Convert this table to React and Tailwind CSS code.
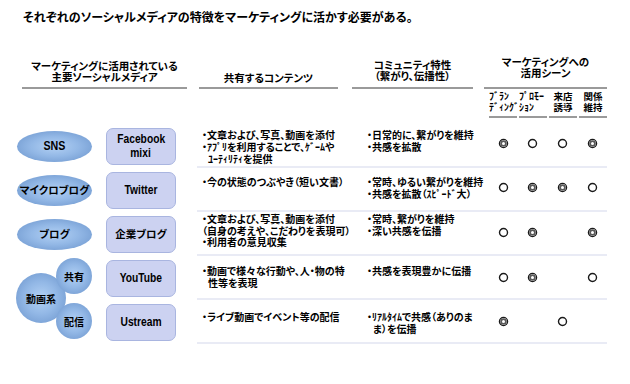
import React from "react";

const jp = "font-['Noto_Sans_CJK_JP',sans-serif] [font-feature-settings:'palt']";
const latin = "font-['Liberation_Sans',Arial,sans-serif]";

function Mark({ type }) {
  if (!type) return <span className="w-[11px] h-[11px]" />;
  if (type === "o")
    return (
      <svg width="11" height="11" viewBox="0 0 11 11">
        <circle cx="5.5" cy="5.5" r="4" fill="white" stroke="#1a1a1a" strokeWidth="1.4" />
      </svg>
    );
  return (
    <svg width="11" height="11" viewBox="0 0 11 11">
      <circle cx="5.5" cy="5.5" r="4.1" fill="white" stroke="#1a1a1a" strokeWidth="1.3" />
      <circle cx="5.5" cy="5.5" r="2.4" fill="white" stroke="#5a5a5a" strokeWidth="1.8" />
    </svg>
  );
}

const rows = [
  {
    c2: [
      { t: "・文章および、写真、動画を添付" },
      { t: "・ｱﾌﾟﾘを利用することで、ｹﾞｰﾑや" },
      { t: "ﾕｰﾃｨﾘﾃｨを提供", indent: true },
    ],
    c3: [{ t: "・日常的に、繋がりを維持" }, { t: "・共感を拡散" }],
    pt: "pt-[5px] leading-[12px]",
    marks: ["d", "o", "o", "d"],
    mp: "pb-[3px]",
  },
  {
    c2: [{ t: "・今の状態のつぶやき（短い文書）" }],
    c3: [{ t: "・常時、ゆるい繋がりを維持" }, { t: "・共感を拡散（ｽﾋﾟｰﾄﾞ大）" }],
    pt: "pt-[8px] leading-[12px]",
    marks: ["o", "d", "d", "o"],
    mp: "pb-[3px]",
  },
  {
    c2: [
      { t: "・文章および、写真、動画を添付" },
      { t: "（自身の考えや、こだわりを表現可）" },
      { t: "・利用者の意見収集" },
    ],
    c3: [{ t: "・常時、繋がりを維持" }, { t: "・深い共感を伝播" }],
    pt: "pt-[1px] leading-[11.5px]",
    marks: ["o", "d", "", "d"],
    mp: "pb-[1px]",
  },
  {
    c2: [{ t: "・動画で様々な行動や、人・物の特" }, { t: "性等を表現", indent: true }],
    c3: [{ t: "・共感を表現豊かに伝播" }],
    pt: "pt-[9px] leading-[11.5px]",
    marks: ["o", "d", "", "o"],
    mp: "",
  },
  {
    c2: [{ t: "・ライブ動画でイベント等の配信" }],
    c3: [{ t: "・ﾘｱﾙﾀｲﾑで共感（ありのま" }, { t: "ま）を伝播", indent: true }],
    pt: "pt-[11px] leading-[11.5px]",
    marks: ["d", "", "o", ""],
    mp: "",
  },
];

const ovalBg =
  "bg-[radial-gradient(ellipse_at_center,#b3d1f4_0%,#93b8e6_45%,#769ed3_82%,#6089c0_100%)]";

function Lines({ lines }) {
  return lines.map((l, i) => (
    <div key={i} className={`whitespace-nowrap ${l.indent ? "pl-[6px]" : ""}`}>
      {l.t}
    </div>
  ));
}

export default function App() {
  return (
    <div className={`w-[630px] h-[384px] bg-white overflow-hidden text-black ${jp}`}>
      <div className="pt-[11px] pl-[23px] text-[12px] leading-[12px] font-bold">
        それぞれのソーシャルメディアの特徴をマーケティングに活かす必要がある。
      </div>

      {/* header */}
      <div className="flex items-start mt-[32px] pl-[22px] font-bold">
        <div className="w-[165px] h-[34px] flex flex-col justify-end items-center border-b-2 border-[#9a9a9a] pb-[5px] text-[10.5px] leading-[11px]">
          <div>マーケティングに活用されている</div>
          <div>主要ソーシャルメディア</div>
        </div>
        <div className="ml-[12px] w-[139px] h-[34px] flex flex-col justify-end items-center border-b-2 border-[#9a9a9a] pb-[4px] text-[10.5px] leading-[11px]">
          <div>共有するコンテンツ</div>
        </div>
        <div className="ml-[14px] w-[121px] h-[34px] flex flex-col justify-end items-center border-b-2 border-[#9a9a9a] pb-[6px] text-[10.5px] leading-[11px]">
          <div>コミュニティ特性</div>
          <div>（繋がり、伝播性）</div>
        </div>
        <div className="ml-[11px] w-[123px] flex flex-col">
          <div className="h-[34px] flex flex-col justify-end items-center border-b-2 border-[#9a9a9a] pb-[9px] text-[10.5px] leading-[11px]">
            <div>マーケティングへの</div>
            <div>活用シーン</div>
          </div>
          <div className="ml-[5px] grid grid-cols-[28px_28px_28px_28px] gap-x-[2px] text-[9.5px] leading-[10.5px] whitespace-nowrap">
            <div className="h-[29px] flex flex-col justify-end border-b-2 border-[#9a9a9a] pb-[4px] text-[10px] [font-feature-settings:normal]">
              <div>ﾌﾞﾗﾝ</div>
              <div>ﾃﾞｨﾝｸﾞ</div>
            </div>
            <div className="h-[29px] flex flex-col justify-end border-b-2 border-[#9a9a9a] pb-[4px] text-[10px] [font-feature-settings:normal]">
              <div>ﾌﾟﾛﾓｰ</div>
              <div>ｼｮﾝ</div>
            </div>
            <div className="h-[29px] flex flex-col justify-end items-center border-b-2 border-[#9a9a9a] pb-[4px]">
              <div>来店</div>
              <div>誘導</div>
            </div>
            <div className="h-[29px] flex flex-col justify-end items-center border-b-2 border-[#9a9a9a] pb-[4px]">
              <div>関係</div>
              <div>維持</div>
            </div>
          </div>
        </div>
      </div>

      {/* body */}
      <div className="flex mt-[6px] font-bold">
        {/* ovals */}
        <div className="w-[106px] flex flex-col">
          {["SNS", "マイクロブログ", "ブログ"].map((t, i) => (
            <div key={t} className="h-[44px] flex items-center pl-[17px]">
              <div
                className={`w-[75px] h-[31px] rounded-[50%] ${ovalBg} flex items-center justify-center whitespace-nowrap text-[10.5px]`}
              >
                {i === 0 ? (
                  <span className={`${latin} text-[13px] inline-block scale-x-[0.82]`}>{t}</span>
                ) : (
                  t
                )}
              </div>
            </div>
          ))}
          <div className="relative h-[88px]">
            <div
              className={`absolute left-[16px] top-[17px] w-[50px] h-[50px] rounded-full ${ovalBg} flex items-center justify-center text-[10px]`}
            >
              動画系
            </div>
            <div
              className={`absolute left-[56px] top-[2px] w-[36px] h-[36px] rounded-full ${ovalBg} flex items-center justify-center text-[10px]`}
            >
              共有
            </div>
            <div
              className={`absolute left-[56px] top-[47px] w-[36px] h-[36px] rounded-full ${ovalBg} flex items-center justify-center text-[10px]`}
            >
              配信
            </div>
          </div>
        </div>

        {/* boxes */}
        <div className="w-[91px] flex flex-col">
          {[
            { t: ["Facebook", "mixi"], latin: true },
            { t: ["Twitter"], latin: true },
            { t: ["企業ブログ"], latin: false },
            { t: ["YouTube"], latin: true },
            { t: ["Ustream"], latin: true },
          ].map((b, i) => (
            <div key={i} className="h-[44px] flex items-center">
              <div
                className={`w-[70px] h-[37px] rounded-[7px] bg-[#ccd2f1] border border-[#a9b5e0] flex flex-col items-center justify-center ${
                  b.latin ? `${latin} text-[12.5px] leading-[14px]` : "text-[10.5px]"
                }`}
              >
                {b.t.map((x) => (
                  <div key={x} className={b.latin ? "scale-x-[0.82] whitespace-nowrap" : "whitespace-nowrap"}>
                    {x}
                  </div>
                ))}
              </div>
            </div>
          ))}
        </div>

        {/* table */}
        <div className="w-[410px] flex flex-col text-[10px]">
          {rows.map((r, i) => (
            <div key={i} className="h-[44px] flex border-b-2 border-[#e9ebf5]">
              <div className={`w-[155px] pl-[5px] ${r.pt}`}>
                <Lines lines={r.c2} />
              </div>
              <div className={`w-[132px] pl-[15px] ${r.pt}`}>
                <Lines lines={r.c3} />
              </div>
              <div
                className={`w-[123px] pl-[4px] grid grid-cols-[30px_29px_30px_30px] items-center justify-items-center ${r.mp}`}
              >
                {r.marks.map((m, j) => (
                  <Mark key={j} type={m} />
                ))}
              </div>
            </div>
          ))}
        </div>
      </div>
    </div>
  );
}
